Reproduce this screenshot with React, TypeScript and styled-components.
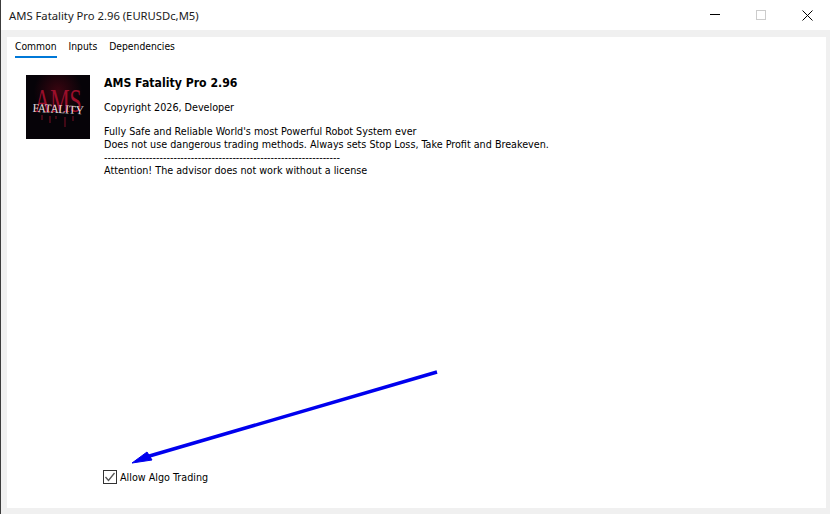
import styled, { createGlobalStyle } from 'styled-components';
import { useState } from 'react';

const GlobalStyle = createGlobalStyle`
  html, body {
    margin: 0;
    padding: 0;
    background: #fff;
  }
  * {
    box-sizing: border-box;
  }
`

const Window = styled.div`
  position: relative;
  width: 830px;
  height: 514px;
  overflow: hidden;
  display: flex;
  flex-direction: column;
  background: #f0f0f0;
  border-left: 1px solid #3c3c3c;
  font-family: "DejaVu Sans", sans-serif;
  font-stretch: condensed;
  font-size: 10.7px;
  color: #000;
`

const TitleBar = styled.div`
  height: 30px;
  flex-shrink: 0;
  display: flex;
  align-items: center;
  justify-content: space-between;
  background: #fff;
  padding-left: 8px;
`

const Title = styled.span`
  font-family: "Noto Sans", sans-serif;
  font-stretch: normal;
  font-size: 11.25px;
  color: #1a1a1a;
`

const WindowButtons = styled.div`
  display: flex;
  height: 100%;
`

const WindowButton = styled.div`
  width: 46px;
  height: 100%;
  display: flex;
  align-items: center;
  justify-content: center;
`

const Panel = styled.div`
  flex: 1;
  margin: 7px 4px 6px 6px;
  background: #fff;
  display: flex;
  flex-direction: column;
`

const Tabs = styled.div`
  display: flex;
  gap: 12px;
  padding: 2px 0 0 8px;
  font-size: 10.25px;
`

const Tab = styled.div<{ $active?: boolean }>`
  height: 19px;
  line-height: 14px;
  border-bottom: 2px solid ${(p) => (p.$active ? '#0078d7' : 'transparent')};
`

const Content = styled.div`
  flex: 1;
  display: flex;
  flex-direction: column;
  justify-content: space-between;
  padding: 17px 0 24px 19px;
`

const Info = styled.div`
  display: flex;
  gap: 14px;
`

const Logo = styled.svg`
  width: 64px;
  height: 64px;
  flex-shrink: 0;
`

const Details = styled.div`
  display: flex;
  flex-direction: column;
`

const Name = styled.div`
  font-size: 12.2px;
  font-weight: 700;
  line-height: 17px;
`

const Copyright = styled.div`
  margin-top: 8px;
  line-height: 16px;
`

const Description = styled.div`
  margin-top: 9px;
  line-height: 13px;
  white-space: pre;
`

const AlgoRow = styled.label`
  display: flex;
  align-items: center;
  gap: 3px;
  margin-left: 77px;
`

const CheckBox = styled.span`
  width: 14px;
  height: 14px;
  border: 1px solid #333;
  background: #fff;
  display: flex;
  align-items: center;
  justify-content: center;
`

const Arrow = styled.svg`
  position: absolute;
  left: -1px;
  top: 0;
  pointer-events: none;
`

const description = `Fully Safe and Reliable World's most Powerful Robot System ever
Does not use dangerous trading methods. Always sets Stop Loss, Take Profit and Breakeven.
--------------------------------------------------------------------
Attention! The advisor does not work without a license`

export default function App() {
  const [allowed, setAllowed] = useState(true)
  return (
    <Window>
      <GlobalStyle />
      <TitleBar>
        <Title>AMS Fatality Pro 2.96 (EURUSDc,M5)</Title>
        <WindowButtons>
          <WindowButton>
            <svg width="10" height="10" viewBox="0 0 10 10">
              <path d="M0 4.5H10" stroke="#000" />
            </svg>
          </WindowButton>
          <WindowButton>
            <svg width="10" height="10" viewBox="0 0 10 10">
              <rect x="0.5" y="0.5" width="9" height="9" fill="none" stroke="#ccc" />
            </svg>
          </WindowButton>
          <WindowButton>
            <svg width="11" height="11" viewBox="0 0 11 11">
              <path d="M0.5 0.5L10.5 10.5M10.5 0.5L0.5 10.5" stroke="#000" />
            </svg>
          </WindowButton>
        </WindowButtons>
      </TitleBar>
      <Panel>
        <Tabs>
          <Tab $active>Common</Tab>
          <Tab>Inputs</Tab>
          <Tab>Dependencies</Tab>
        </Tabs>
        <Content>
          <Info>
            <Logo viewBox="0 0 64 64">
              <defs>
                <radialGradient id="glow" cx="50%" cy="25%" r="38%">
                  <stop offset="0%" stopColor="#3a0510" />
                  <stop offset="100%" stopColor="#060308" />
                </radialGradient>
              </defs>
              <rect width="64" height="64" fill="url(#glow)" />
              <text transform="translate(32 37) scale(0.64 1)" textAnchor="middle" fontFamily="Liberation Serif" fontSize="34" fill="#9c0f2b">
                AMS
              </text>
              <text transform="translate(32 38) rotate(3) scale(0.92 1)" textAnchor="middle" fontFamily="Liberation Serif" fontSize="12" fill="#f2e4e6">
                FATALITY
              </text>
              <path d="M16 40V45M24 41V48M30 41V44M39 42V52M47 41V46" stroke="#7d0e22" strokeWidth="1" />
            </Logo>
            <Details>
              <Name>AMS Fatality Pro 2.96</Name>
              <Copyright>Copyright 2026, Developer</Copyright>
              <Description>{description}</Description>
            </Details>
          </Info>
          <AlgoRow onClick={() => setAllowed(!allowed)}>
            <CheckBox>
              {allowed ? (
                <svg width="12" height="12" viewBox="0 0 12 12">
                  <path d="M1.5 6L4.5 9.5L10.5 2" fill="none" stroke="#555" strokeWidth="1.3" />
                </svg>
              ) : null}
            </CheckBox>
            <span>Allow Algo Trading</span>
          </AlgoRow>
        </Content>
      </Panel>
      <Arrow width="830" height="514" viewBox="0 0 830 514">
        <path d="M437 372L146 457" stroke="#0000ee" strokeWidth="3.4" />
        <path d="M132 463L147 452L152 460Z" fill="#0000ee" stroke="#0000ee" />
      </Arrow>
    </Window>
  )
}
